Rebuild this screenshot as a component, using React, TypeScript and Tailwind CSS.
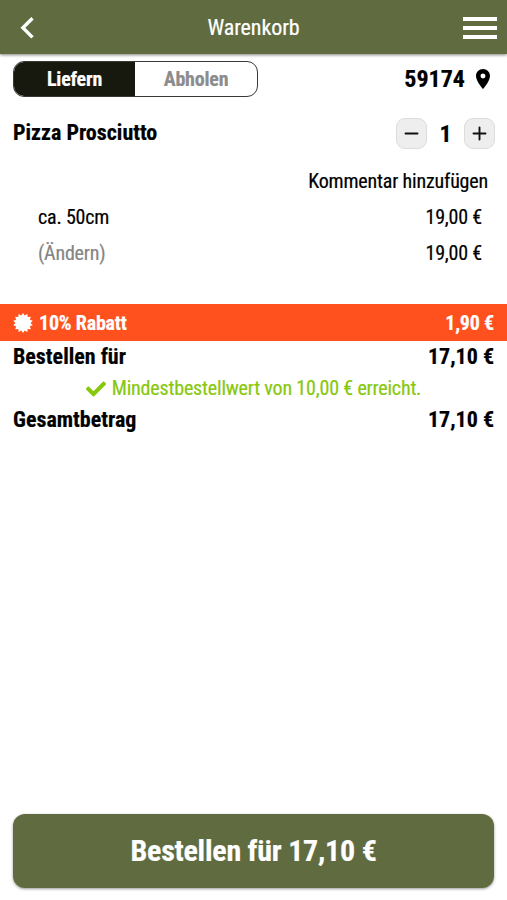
import { FaCheck } from "react-icons/fa";
import { MdLocationOn } from "react-icons/md";

const SEAL_TEETH = 14;
const sealPoints = Array.from({ length: SEAL_TEETH * 2 }, (_, i) => {
  const radius = i % 2 === 0 ? 10 : 7.6;
  const angle = (Math.PI * i) / SEAL_TEETH;
  return `${(10 + radius * Math.sin(angle)).toFixed(2)},${(10 - radius * Math.cos(angle)).toFixed(2)}`;
}).join(" ");

function PriceRow({ label, price }: { label: string; price: string }) {
  return (
    <div className="flex h-8 items-center justify-between px-[13px] text-[22px] leading-8 font-bold">
      <span>{label}</span>
      <span>{price}</span>
    </div>
  );
}

function QuantityButton({ plus = false }: { plus?: boolean }) {
  return (
    <button className="flex h-[31px] w-[31px] items-center justify-center rounded-[9px] border border-[#dcdcdc] bg-[#eeeeee]">
      <svg width="15" height="15" viewBox="0 0 15 15" stroke="#111" strokeWidth="1.9" strokeLinecap="round">
        <path d={plus ? "M1.5 7.5H13.5M7.5 1.5V13.5" : "M1.5 7.5H13.5"} />
      </svg>
    </button>
  );
}

export default function App() {
  return (
    <div className="flex h-[900px] w-[507px] flex-col overflow-hidden bg-white font-['Roboto_Condensed','Roboto',sans-serif] text-black [font-stretch:75%] [-webkit-text-stroke:0.2px_currentColor]">
      <header className="flex h-[54px] shrink-0 items-center bg-[#606c40] pr-[10px] pl-[18px] text-white shadow-[0_1px_3px_rgba(0,0,0,0.5)]">
        <svg width="34" height="22" viewBox="0 0 34 22" fill="none" stroke="white" strokeWidth="3.4" className="mt-[2px]">
          <path d="M14.5 1.2L4.9 10.8L14.5 20.4" />
        </svg>
        <h1 className="flex-1 pt-[2px] pr-[8px] text-center text-[22px] leading-8 tracking-[-0.1px]">Warenkorb</h1>
        <div className="mt-[2px] flex w-[34px] flex-col gap-[5px]">
          <span className="h-1 bg-white" />
          <span className="h-1 bg-white" />
          <span className="h-1 bg-white" />
        </div>
      </header>

      <div className="mt-[7px] flex h-9 items-center justify-between pr-3 pl-[13px]">
        <div className="flex h-9 w-[245px] overflow-hidden rounded-[11px] border border-[#3a3a35] text-[20px] font-bold tracking-[-0.2px]">
          <button className="w-[121px] bg-[#17190f] text-white">Liefern</button>
          <button className="flex-1 text-[#8c8c8c]">Abholen</button>
        </div>
        <div className="flex items-center gap-[6px] text-[24px] font-bold">
          <span>59174</span>
          <MdLocationOn className="h-6 w-6" />
        </div>
      </div>

      <div className="mt-[21px] flex h-[31px] items-center justify-between pr-3 pl-[13px]">
        <h2 className="-mt-[2px] text-[22px] leading-7 font-bold">Pizza Prosciutto</h2>
        <div className="flex items-center text-[24px] font-bold">
          <QuantityButton />
          <span className="w-[37px] pt-px text-center leading-[30px]">1</span>
          <QuantityButton plus />
        </div>
      </div>

      <div className="mt-[14px] pr-[19px] text-right text-[20px] leading-9 tracking-[-0.18px]">Kommentar hinzufügen</div>
      <div className="flex justify-between pr-[25px] pl-[38px] text-[20px] leading-9 tracking-[-0.2px]">
        <span>ca. 50cm</span>
        <span>19,00 €</span>
      </div>
      <div className="flex justify-between pr-[25px] pl-[38px] text-[20px] leading-9 tracking-[-0.2px]">
        <span className="text-[#858585]">(Ändern)</span>
        <span>19,00 €</span>
      </div>

      <div className="mt-[33px] flex h-[37px] items-center justify-between bg-[#ff511d] px-[13px] text-[20px] font-bold tracking-[-0.2px] text-white">
        <span className="flex items-center gap-[6px]">
          <svg width="20" height="20" viewBox="0 0 20 20" fill="currentColor">
            <polygon points={sealPoints} />
          </svg>
          10% Rabatt
        </span>
        <span>1,90 €</span>
      </div>
      <PriceRow label="Bestellen für" price="17,10 €" />
      <div className="flex h-[31px] items-center justify-center gap-[6px] text-[20px] tracking-[-0.18px] text-[#87c80c]">
        <FaCheck className="h-5 w-5" />
        <span className="-mt-px">Mindestbestellwert von 10,00 € erreicht.</span>
      </div>
      <PriceRow label="Gesamtbetrag" price="17,10 €" />

      <button className="mx-[13px] mt-auto mb-[12px] h-[74px] rounded-[12px] bg-[#606c40] pb-[2px] text-[30px] font-bold tracking-[-0.23px] text-white shadow-[0_1px_3px_rgba(0,0,0,0.4)]">
        Bestellen für 17,10 €
      </button>
    </div>
  );
}
